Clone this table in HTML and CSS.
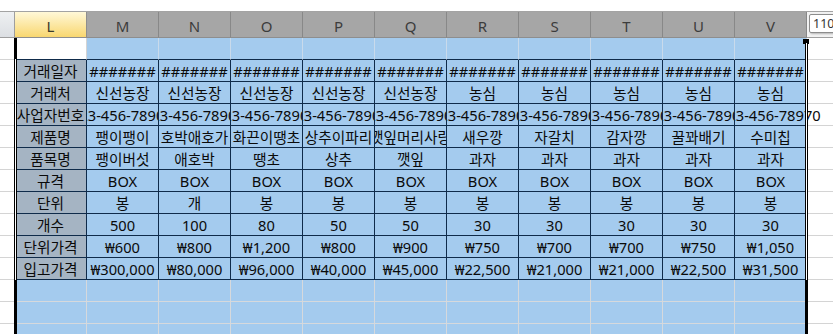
FILE: index.html
```html
<!DOCTYPE html>
<html lang="ko">
<head>
<meta charset="utf-8">
<title>Sheet</title>
<link rel="stylesheet" href="styles.css">
</head>
<body>
<div class="sheet">
  <div class="row hrow">
    <div class="cell hd-k"></div>
    <div class="cell hd-l">L</div>
    <div class="cell hd">M</div>
    <div class="cell hd">N</div>
    <div class="cell hd">O</div>
    <div class="cell hd">P</div>
    <div class="cell hd">Q</div>
    <div class="cell hd">R</div>
    <div class="cell hd">S</div>
    <div class="cell hd">T</div>
    <div class="cell hd">U</div>
    <div class="cell hd hd-v">V</div>
    <div class="cell hd-w"></div>
  </div>

  <div class="row">
    <div class="cell k k-top"></div>
    <div class="cell active"></div>
    <div class="cell topb"></div><div class="cell topb"></div><div class="cell topb"></div><div class="cell topb"></div><div class="cell topb"></div>
    <div class="cell topb"></div><div class="cell topb"></div><div class="cell topb"></div><div class="cell topb"></div><div class="cell topb"></div>
    <div class="cell w"></div>
  </div>

  <div class="row">
    <div class="cell k k-t"></div>
    <div class="cell lb">거래일자</div>
    <div class="cell t">#######</div><div class="cell t">#######</div><div class="cell t">#######</div><div class="cell t">#######</div><div class="cell t">#######</div>
    <div class="cell t">#######</div><div class="cell t">#######</div><div class="cell t">#######</div><div class="cell t">#######</div><div class="cell t">#######</div>
    <div class="cell w"></div>
  </div>

  <div class="row">
    <div class="cell k k-t"></div>
    <div class="cell lb">거래처</div>
    <div class="cell t">신선농장</div><div class="cell t">신선농장</div><div class="cell t">신선농장</div><div class="cell t">신선농장</div><div class="cell t">신선농장</div>
    <div class="cell t">농심</div><div class="cell t">농심</div><div class="cell t">농심</div><div class="cell t">농심</div><div class="cell t">농심</div>
    <div class="cell w"></div>
  </div>

  <div class="row">
    <div class="cell k k-t"></div>
    <div class="cell lb">사업자번호</div>
    <div class="cell t biz"><span>123-456-7890</span></div>
    <div class="cell t biz"><span>123-456-7890</span></div>
    <div class="cell t biz"><span>123-456-7890</span></div>
    <div class="cell t biz"><span>123-456-7890</span></div>
    <div class="cell t biz"><span>123-456-7890</span></div>
    <div class="cell t biz"><span>123-456-7890</span></div>
    <div class="cell t biz"><span>123-456-7890</span></div>
    <div class="cell t biz"><span>123-456-7890</span></div>
    <div class="cell t biz"><span>123-456-7890</span></div>
    <div class="cell t biz spill"><span>123-456-78970</span></div>
    <div class="cell w"></div>
  </div>

  <div class="row">
    <div class="cell k k-t"></div>
    <div class="cell lb">제품명</div>
    <div class="cell t">팽이팽이</div><div class="cell t">호박애호가</div><div class="cell t">화끈이땡초</div><div class="cell t">상추이파리</div><div class="cell t">깻잎머리사랑</div>
    <div class="cell t">새우깡</div><div class="cell t">자갈치</div><div class="cell t">감자깡</div><div class="cell t">꿀꽈배기</div><div class="cell t">수미칩</div>
    <div class="cell w"></div>
  </div>

  <div class="row">
    <div class="cell k k-t"></div>
    <div class="cell lb">품목명</div>
    <div class="cell t">팽이버섯</div><div class="cell t">애호박</div><div class="cell t">땡초</div><div class="cell t">상추</div><div class="cell t">깻잎</div>
    <div class="cell t">과자</div><div class="cell t">과자</div><div class="cell t">과자</div><div class="cell t">과자</div><div class="cell t">과자</div>
    <div class="cell w"></div>
  </div>

  <div class="row">
    <div class="cell k k-t"></div>
    <div class="cell lb">규격</div>
    <div class="cell t">BOX</div><div class="cell t">BOX</div><div class="cell t">BOX</div><div class="cell t">BOX</div><div class="cell t">BOX</div>
    <div class="cell t">BOX</div><div class="cell t">BOX</div><div class="cell t">BOX</div><div class="cell t">BOX</div><div class="cell t">BOX</div>
    <div class="cell w"></div>
  </div>

  <div class="row">
    <div class="cell k k-t"></div>
    <div class="cell lb">단위</div>
    <div class="cell t">봉</div><div class="cell t">개</div><div class="cell t">봉</div><div class="cell t">봉</div><div class="cell t">봉</div>
    <div class="cell t">봉</div><div class="cell t">봉</div><div class="cell t">봉</div><div class="cell t">봉</div><div class="cell t">봉</div>
    <div class="cell w"></div>
  </div>

  <div class="row">
    <div class="cell k k-t"></div>
    <div class="cell lb">개수</div>
    <div class="cell t">500</div><div class="cell t">100</div><div class="cell t">80</div><div class="cell t">50</div><div class="cell t">50</div>
    <div class="cell t">30</div><div class="cell t">30</div><div class="cell t">30</div><div class="cell t">30</div><div class="cell t">30</div>
    <div class="cell w"></div>
  </div>

  <div class="row">
    <div class="cell k k-t"></div>
    <div class="cell lb">단위가격</div>
    <div class="cell t">₩600</div><div class="cell t">₩800</div><div class="cell t">₩1,200</div><div class="cell t">₩800</div><div class="cell t">₩900</div>
    <div class="cell t">₩750</div><div class="cell t">₩700</div><div class="cell t">₩700</div><div class="cell t">₩750</div><div class="cell t">₩1,050</div>
    <div class="cell w"></div>
  </div>

  <div class="row">
    <div class="cell k k-t"></div>
    <div class="cell lb">입고가격</div>
    <div class="cell t">₩300,000</div><div class="cell t">₩80,000</div><div class="cell t">₩96,000</div><div class="cell t">₩40,000</div><div class="cell t">₩45,000</div>
    <div class="cell t">₩22,500</div><div class="cell t">₩21,000</div><div class="cell t">₩21,000</div><div class="cell t">₩22,500</div><div class="cell t">₩31,500</div>
    <div class="cell w"></div>
  </div>

  <div class="row">
    <div class="cell k"></div>
    <div class="cell bl"></div><div class="cell bl"></div><div class="cell bl"></div><div class="cell bl"></div><div class="cell bl"></div><div class="cell bl"></div>
    <div class="cell bl"></div><div class="cell bl"></div><div class="cell bl"></div><div class="cell bl"></div><div class="cell bl"></div>
    <div class="cell w"></div>
  </div>
  <div class="row">
    <div class="cell k"></div>
    <div class="cell bl"></div><div class="cell bl"></div><div class="cell bl"></div><div class="cell bl"></div><div class="cell bl"></div><div class="cell bl"></div>
    <div class="cell bl"></div><div class="cell bl"></div><div class="cell bl"></div><div class="cell bl"></div><div class="cell bl"></div>
    <div class="cell w"></div>
  </div>
  <div class="row">
    <div class="cell k"></div>
    <div class="cell bl"></div><div class="cell bl"></div><div class="cell bl"></div><div class="cell bl"></div><div class="cell bl"></div><div class="cell bl"></div>
    <div class="cell bl"></div><div class="cell bl"></div><div class="cell bl"></div><div class="cell bl"></div><div class="cell bl"></div>
    <div class="cell w"></div>
  </div>

  <div class="sel sel-left"></div>
  <div class="sel sel-right"></div>
  <div class="sel handle"></div>
  <div class="ants ants-left"></div>
  <div class="ants ants-right"></div>
  <div class="tip">110</div>
</div>
</body>
</html>
```

FILE: styles.css
```css
* { box-sizing: border-box; margin: 0; padding: 0; }
html, body { width: 833px; height: 334px; overflow: hidden; background: #fff; }
body {
  font-family: "Noto Sans", "Noto Sans CJK KR", sans-serif;
  font-size: 14.67px;
  color: #0a0a0a;
}
.sheet { position: relative; padding-top: 11px; height: 334px; }

.row {
  display: grid;
  grid-template-columns: 15px repeat(11, 72px) 1fr;
  height: 22px;
}
.hrow { height: 27px; border-top: 1px solid #a3a3a3; }

.cell {
  display: flex;
  align-items: center;
  justify-content: center;
  overflow: hidden;
  white-space: nowrap;
  line-height: 1;
  border-right: 1px solid #d4d4d4;
  border-bottom: 1px solid #d4d4d4;
  padding-top: 1px;
}

/* column headers */
.hrow .cell { padding-top: 4px; }
.hd-k { background: linear-gradient(#eef0f2, #dcdfe3); border-right-color: #9e9e9e; border-bottom-color: #9e9e9e; }
.hd-l {
  background: linear-gradient(#fff8d8, #f9d770);
  color: #3b3b2b;
  border-right-color: #8e8e8e;
  border-bottom-color: #8e8e8e;
  font-size: 15px;
}
.hd {
  background: #a6a6a6;
  color: #3c3c3c;
  border-right-color: #888;
  border-bottom-color: #8e8e8e;
  font-size: 15px;
}
.hd-w { background: #f2f2f2; border-right: none; border-bottom-color: #9e9e9e; }

/* plain columns K and W */
.k { background: #fff; border-right-color: #d4d4d4; }
.k-t { border-right-color: #0f2b4a; }
.w { background: #fff; border-right: none; }

/* first (blank) row */
.active { background: #fff; border-bottom-color: #0f2b4a; border-right-color: #d4d4d4; }
.topb { background: #a4cbee; border-right-color: #c9daeb; border-bottom-color: #0f2b4a; }

/* table */
.t { background: #a4cbee; border-right-color: #0f2b4a; border-bottom-color: #0f2b4a; }
.lb { background: #a5b4c3; border-right-color: #0f2b4a; border-bottom-color: #0f2b4a; }

.biz { justify-content: flex-start; }
.biz span { margin-left: -16px; }
.spill { overflow: visible; clip-path: inset(0 -40px 0 0); }

/* blank selected rows */
.bl { background: #a4cbee; border-right-color: #d6d9dc; border-bottom-color: #d6d9dc; }

/* selection overlays */
.sel { position: absolute; background: #000; }
.sel-left { left: 14px; top: 38px; width: 3px; bottom: 0; }
.sel-right { left: 805px; top: 43px; width: 3px; bottom: 0; }
.handle { left: 803px; top: 39px; width: 6px; height: 5px; }

.ants {
  position: absolute;
  top: 59px;
  height: 221px;
  width: 3px;
  border-left: 1px solid #000;
  border-right: 1px solid #000;
  background: #fff;
}
.ants-left { left: 14px; }
.ants-right { left: 805px; top: 43px; height: 237px; }

.tip {
  position: absolute;
  left: 809px;
  top: 14px;
  width: 40px;
  height: 19px;
  background: #fff;
  border: 1px solid #8c8c8c;
  border-radius: 2px;
  box-shadow: 1px 1px 2px rgba(0, 0, 0, 0.25);
  font-size: 12.5px;
  color: #333;
  padding-left: 3px;
  line-height: 17px;
}
```
